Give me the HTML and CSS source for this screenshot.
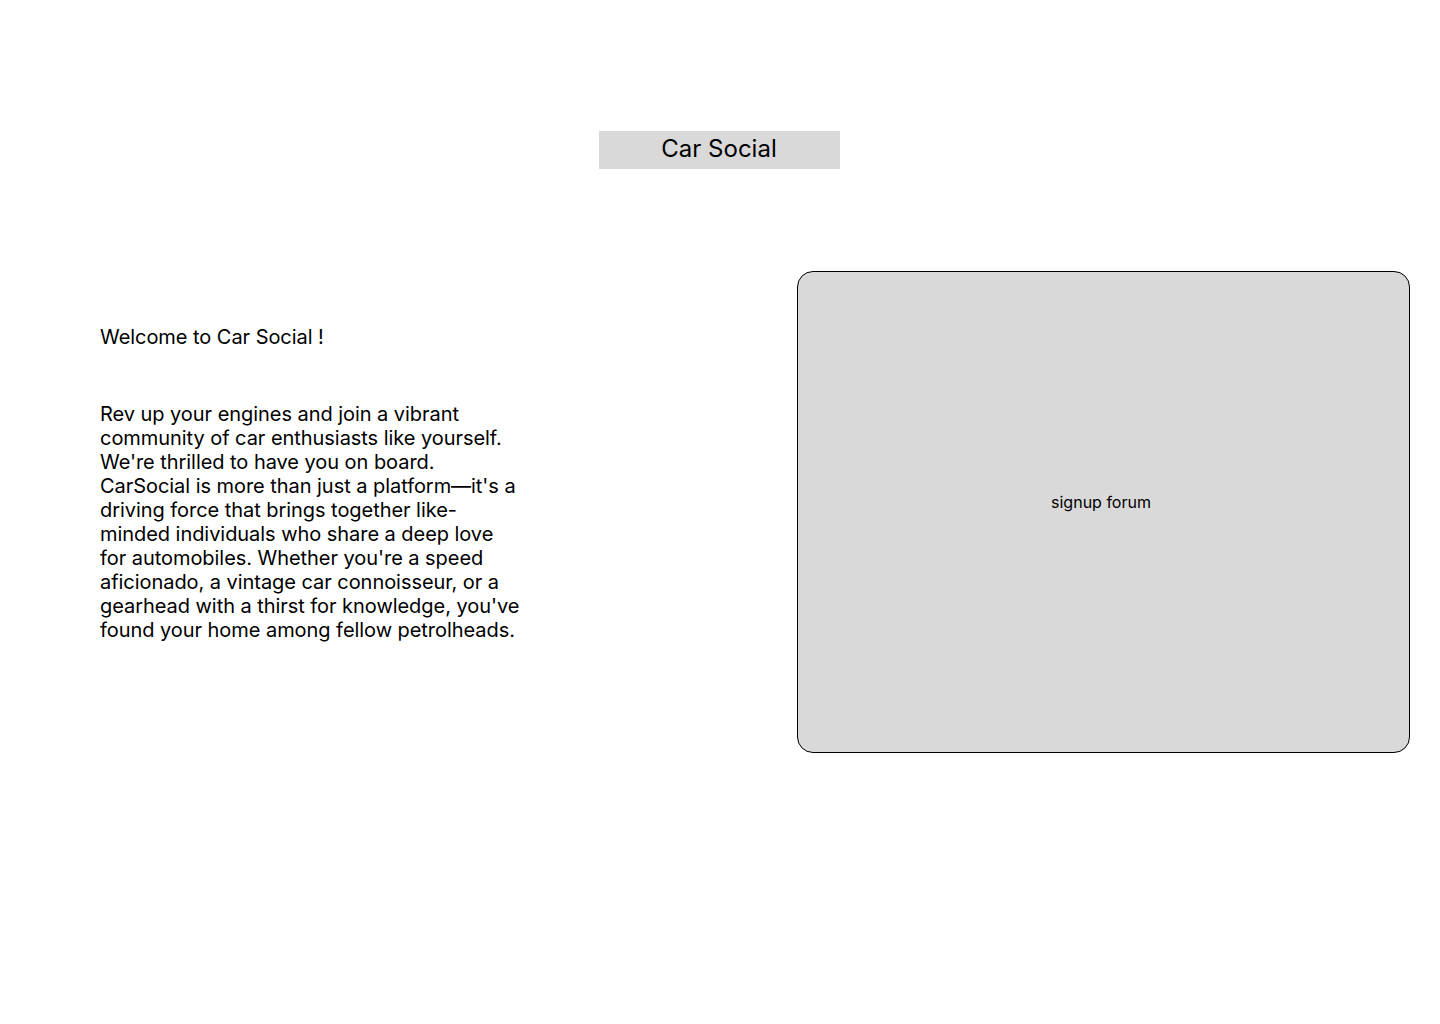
FILE: index.html
```html
<!DOCTYPE html>
<html lang="en">
<head>
<meta charset="utf-8">
<title>Car Social</title>
<link rel="stylesheet" href="styles.css">
</head>
<body>
<header class="header">
  <div class="brand">Car Social</div>
</header>
<main class="main">
  <section class="intro">
    <p class="welcome">Welcome to Car Social !</p>
    <p class="blurb">Rev up your engines and join a vibrant community of car enthusiasts like yourself. We're thrilled to have you on board. CarSocial is more than just a platform—it's a driving force that brings together like-minded individuals who share a deep love for automobiles. Whether you're a speed aficionado, a vintage car connoisseur, or a gearhead with a thirst for knowledge, you've found your home among fellow petrolheads.</p>
  </section>
  <section class="signup">
    <span class="signup-label">signup forum</span>
  </section>
</main>
</body>
</html>
```

FILE: styles.css
```css
html, body {
  margin: 0;
  padding: 0;
  background: #ffffff;
}
body {
  font-family: Inter, "Noto Sans", sans-serif;
  color: #000000;
  width: 1440px;
  height: 1024px;
}
.header {
  display: flex;
  justify-content: center;
  padding-top: 131px;
  padding-right: 2px;
}
.brand {
  width: 241px;
  height: 38px;
  box-sizing: border-box;
  padding-bottom: 3px;
  background: #d9d9d9;
  display: flex;
  align-items: center;
  justify-content: center;
  font-size: 24px;
  line-height: 29px;
}
.main {
  display: flex;
  align-items: flex-start;
  padding: 102px 30px 0 100px;
}
.intro {
  width: 424px;
  padding-top: 54px;
}
.welcome {
  margin: 0;
  font-size: 20px;
  line-height: 24px;
  letter-spacing: -0.05px;
}
.blurb {
  margin: 53px 0 0 0;
  font-size: 20px;
  line-height: 24px;
  letter-spacing: -0.05px;
}
.signup {
  margin-left: auto;
  width: 611px;
  height: 480px;
  border: 1px solid #000000;
  border-radius: 16px;
  background: #d9d9d9;
  display: flex;
  align-items: center;
  justify-content: center;
  box-sizing: content-box;
}
.signup-label {
  font-size: 16px;
  line-height: 19px;
  margin-bottom: 20px;
  margin-right: 5px;
}
```
